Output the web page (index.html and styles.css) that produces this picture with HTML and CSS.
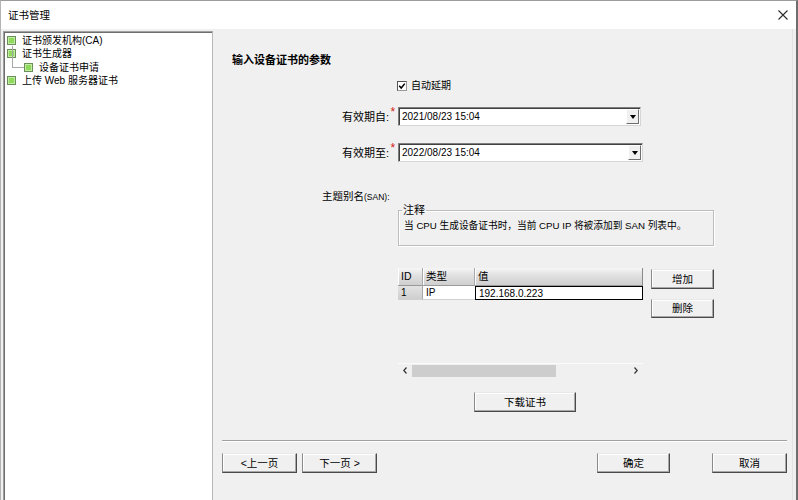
FILE: index.html
```html
<!DOCTYPE html>
<html lang="zh-CN">
<head>
<meta charset="utf-8">
<title>证书管理</title>
<link rel="stylesheet" href="styles.css">
</head>
<body>
<div class="window">
  <div class="titlebar">
    <span class="title">证书管理</span>
    <svg class="close" viewBox="0 0 10 10"><path d="M0.5 0.5 L9.5 9.5 M9.5 0.5 L0.5 9.5" stroke="#2b2b2b" stroke-width="1.1" fill="none"/></svg>
  </div>
  <div class="main">
    <div class="tree">
      <div class="node"><i class="ico"></i><span>证书颁发机构(CA)</span></div>
      <div class="node"><i class="ico"></i><span>证书生成器</span></div>
      <div class="node child"><i class="branch"></i><i class="ico"></i><span>设备证书申请</span></div>
      <div class="node"><i class="ico"></i><span>上传 Web 服务器证书</span></div>
    </div>
    <div class="content">
      <h1 class="heading">输入设备证书的参数</h1>
      <div class="check-row">
        <span class="checkbox"><svg viewBox="0 0 8 8"><path d="M1.2 3.8 L3.2 6 L6.8 1.6" stroke="#000" stroke-width="1.5" fill="none"/></svg></span>
        <span>自动延期</span>
      </div>
      <div class="field-row first">
        <span class="label">有效期自:</span><span class="req">*</span>
        <div class="combo w1"><span class="value">2021/08/23 15:04</span><span class="arrow"><i></i></span></div>
      </div>
      <div class="field-row second">
        <span class="label">有效期至:</span><span class="req">*</span>
        <div class="combo w2"><span class="value">2022/08/23 15:04</span><span class="arrow"><i></i></span></div>
      </div>
      <div class="san-label">主题别名<span class="small">(SAN):</span></div>
      <fieldset class="note">
        <legend>注释</legend>
        <div class="note-text">当 CPU 生成设备证书时，当前 CPU IP 将被添加到 SAN 列表中。</div>
      </fieldset>
      <div class="list-row">
        <div class="list">
          <div class="grid">
            <div class="th">ID</div><div class="th">类型</div><div class="th last">值</div>
            <div class="td idc">1</div><div class="td">IP</div><div class="td edit">192.168.0.223</div>
          </div>
          <div class="hscroll">
            <svg class="chev" viewBox="0 0 4 7"><path d="M3.5 0.5 L0.8 3.5 L3.5 6.5" stroke="#333" stroke-width="1.2" fill="none"/></svg>
            <span class="thumb"></span>
            <svg class="chev right" viewBox="0 0 4 7"><path d="M0.5 0.5 L3.2 3.5 L0.5 6.5" stroke="#333" stroke-width="1.2" fill="none"/></svg>
          </div>
        </div>
        <div class="side-buttons">
          <button class="btn add">增加</button>
          <button class="btn del">删除</button>
        </div>
      </div>
      <button class="btn download">下载证书</button>
      <div class="sep"></div>
      <div class="nav">
        <button class="btn prev">&lt;上一页</button>
        <button class="btn next">下一页 &gt;</button>
        <button class="btn ok">确定</button>
        <button class="btn cancel">取消</button>
      </div>
    </div>
  </div>
</div>
</body>
</html>
```

FILE: styles.css
```css
* { box-sizing: border-box; }
html, body { margin: 0; padding: 0; }
body {
  width: 798px;
  height: 500px;
  overflow: hidden;
  background: #f0f0f0;
  font-family: "Liberation Sans", "Noto Sans CJK SC", sans-serif;
  font-size: 10px;
  color: #000;
}
.window {
  width: 798px;
  height: 500px;
  border-top: 1px solid #9c9c9c;
  border-left: 1px solid #b4b4b4;
  border-right: 2px solid #6e6e6e;
  display: flex;
  flex-direction: column;
  background: #f0f0f0;
}
.titlebar {
  height: 28px;
  flex: none;
  background: #fff;
  display: flex;
  align-items: center;
  justify-content: space-between;
  padding: 0 8px 0 7px;
}
.title { font-size: 10.5px; line-height: 14px; }
.close { width: 10px; height: 10px; display: block; }

.main { flex: 1; display: flex; min-height: 0; }

/* tree */
.tree {
  width: 210px;
  flex: none;
  margin: 2px 0 -20px 2px;
  background: #fff;
  border-top: 1px solid #a0a0a0;
  border-left: 1px solid #a0a0a0;
  border-right: 1px solid #b8b8b8;
  box-shadow: inset 1px 1px 0 #6e6e6e;
  padding: 1.5px 0 0 3px;
}
.node {
  display: flex;
  align-items: center;
  height: 13.5px;
  line-height: 13.5px;
  white-space: nowrap;
}
.ico {
  width: 9px;
  height: 9px;
  flex: none;
  border: 1px solid #6b8f5a;
  background: #8fd95c;
  box-shadow: inset 0 0 0 1px #c2eda3;
  margin-right: 6px;
}
.branch {
  flex: none;
  align-self: flex-start;
  width: 12px;
  height: 22px;
  margin: -15px 0 0 5px;
  border-left: 1px solid #a8a8a8;
  border-bottom: 1px solid #a8a8a8;
}

/* content */
.content {
  flex: 1;
  padding-left: 19px;
  display: flex;
  flex-direction: column;
  align-items: flex-start;
  margin-right: 3px;
  border-right: 1px solid #e2e2e2;
}
.heading {
  margin: 24px 0 0;
  font-size: 11px;
  font-weight: bold;
  line-height: 14px;
}
.check-row {
  margin: 13px 0 0 165px;
  display: flex;
  align-items: center;
  height: 12px;
  line-height: 12px;
}
.checkbox {
  width: 10px;
  height: 10px;
  border: 1px solid;
  border-color: #555 #999 #999 #555;
  background: #fff;
  margin-right: 4px;
  display: flex;
  align-items: center;
  justify-content: center;
}
.checkbox svg { width: 8px; height: 8px; display: block; }

.field-row { display: flex; align-items: center; height: 19px; }
.field-row.first { margin-top: 15px; }
.field-row.second { margin-top: 17px; }
.label {
  width: 157px;
  text-align: right;
  font-size: 11px;
  line-height: 14px;
}
.req {
  width: 9px;
  align-self: flex-start;
  color: #d21a1a;
  font-size: 12px;
  line-height: 11px;
  padding-left: 1.5px;
}
.combo {
  height: 19px;
  display: flex;
  background: #fff;
  border: 1px solid;
  border-color: #7f7f7f #d6d6d6 #d6d6d6 #7f7f7f;
  box-shadow: inset 1px 1px 0 #404040;
}
.combo.w1 { width: 243px; }
.combo.w2 { width: 245px; }
.combo .value {
  flex: 1;
  padding-left: 3px;
  line-height: 17px;
  font-size: 10px;
}
.combo .arrow {
  width: 13px;
  margin: 1px 1px 1px 0;
  background: #f0f0f0;
  border: 1px solid;
  border-color: #fff #6e6e6e #6e6e6e #fff;
  display: flex;
  align-items: center;
  justify-content: center;
}
.combo .arrow i {
  width: 0;
  height: 0;
  border-left: 3.5px solid transparent;
  border-right: 3.5px solid transparent;
  border-top: 4px solid #000;
}

.san-label {
  margin: 28px 0 0 90px;
  font-size: 10.5px;
  line-height: 13px;
}
.san-label .small { font-size: 8.5px; }

.note {
  margin: 0 0 0 166px;
  width: 316px;
  padding: 3px 0 13px 5px;
  border: 1px solid #bdbdbd;
  box-shadow: inset 1px 1px 0 #fff, 1px 1px 0 #fff;
}
.note legend {
  font-size: 11px;
  line-height: 12px;
  padding: 0 1px;
  margin-left: -2px;
}
.note-text { line-height: 13px; font-size: 9.7px; }

.list-row { display: flex; margin: 22px 0 0 166px; }
.list {
  width: 245px;
  height: 109px;
  display: flex;
  flex-direction: column;
}
.grid {
  display: grid;
  grid-template-columns: 25px 52px 1fr;
}
.th {
  height: 18px;
  line-height: 17px;
  padding-left: 3px;
  font-size: 10.5px;
  background: linear-gradient(#f6f6f6, #e0e0e0 45%, #cfcfcf);
  border-right: 1px solid #a9a9a9;
  border-bottom: 1px solid #9a9a9a;
  box-shadow: inset 1px 0 0 #fff;
}
.th.last { border-right: 1px solid #8a8a8a; }
.td {
  height: 14px;
  line-height: 13px;
  padding-left: 3px;
  background: #fff;
  border-bottom: 1px solid #d0d0d0;
}
.td.idc {
  background: linear-gradient(#e2e2e2, #cfcfcf);
  border-right: 1px solid #a9a9a9;
}
.td.edit {
  border: 1px solid #000;
  padding-left: 3px;
}
.hscroll {
  margin-top: auto;
  height: 14px;
  border-top: 1px solid #fbfbfb;
  display: flex;
  align-items: center;
  padding: 0 5px;
}
.chev { width: 4px; height: 7px; display: block; }
.thumb {
  width: 144px;
  height: 12px;
  margin-left: 5px;
  background: #cdcdcd;
}
.chev.right { margin-left: auto; }

.btn {
  font-family: "Liberation Sans", "Noto Sans CJK SC", sans-serif;
  font-size: 10.5px;
  color: #000;
  background: #f0f0f0;
  border: 1px solid;
  border-color: #e8e8e8 #4a4a4a #4a4a4a #8a8a8a;
  box-shadow: inset -1px -1px 0 #a8a8a8, inset 1px 1px 0 #fff;
  padding: 0;
  height: 20px;
  line-height: 17px;
  text-align: center;
}
.side-buttons {
  margin-left: 8px;
  display: flex;
  flex-direction: column;
}
.btn.add { width: 63px; margin-top: 1px; height: 20px; }
.btn.del { width: 63px; margin-top: 10px; height: 19px; }
.btn.download { width: 102px; margin: 15px 0 0 242px; }

.sep {
  margin: 28px 0 0 -10px;
  width: 565px;
  height: 2px;
  border-top: 1px solid #a0a0a0;
  border-bottom: 1px solid #fff;
}
.nav {
  display: flex;
  width: 565px;
  margin: 11px 0 0 -10px;
}
.btn.prev { width: 75px; }
.btn.next { width: 75px; margin-left: 5px; }
.btn.ok { width: 73px; margin-left: auto; }
.btn.cancel { width: 75px; margin-left: 42px; }
```
